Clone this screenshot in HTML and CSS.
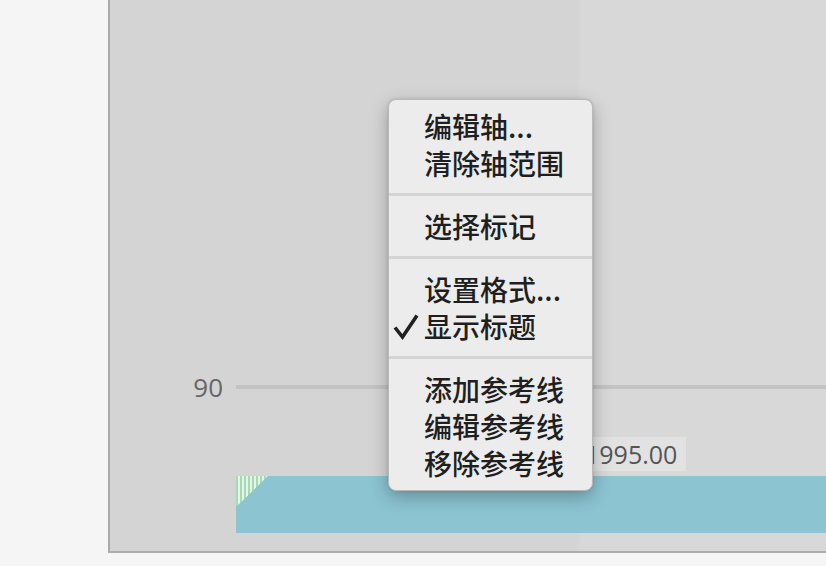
FILE: index.html
```html
<!DOCTYPE html>
<html lang="zh-CN">
<head>
<meta charset="utf-8">
<title>轴菜单</title>
<link rel="stylesheet" href="styles.css">
</head>
<body>
<div class="page">
  <div class="panel">
    <div class="plot-empty"></div>
    <div class="grid-row">
      <div class="axis-label">90</div>
      <div class="grid-line"></div>
    </div>
    <div class="label-row">
      <div class="data-label">1995.00</div>
    </div>
    <div class="bar">
      <div class="hatch"></div>
    </div>
  </div>

  <div class="menu">
    <div class="section">
      <div class="item"><span class="check"></span><span class="text">编辑轴...</span></div>
      <div class="item"><span class="check"></span><span class="text">清除轴范围</span></div>
    </div>
    <div class="sep"></div>
    <div class="section">
      <div class="item"><span class="check"></span><span class="text">选择标记</span></div>
    </div>
    <div class="sep"></div>
    <div class="section">
      <div class="item"><span class="check"></span><span class="text">设置格式...</span></div>
      <div class="item"><span class="check"><svg width="26" height="26" viewBox="0 0 26 26"><path d="M2 13.5 L9.5 23 L24 1.5" fill="none" stroke="#202020" stroke-width="3.6" stroke-linejoin="miter"/></svg></span><span class="text">显示标题</span></div>
    </div>
    <div class="sep"></div>
    <div class="section">
      <div class="item"><span class="check"></span><span class="text">添加参考线</span></div>
      <div class="item"><span class="check"></span><span class="text">编辑参考线</span></div>
      <div class="item"><span class="check"></span><span class="text">移除参考线</span></div>
    </div>
  </div>
</div>
</body>
</html>
```

FILE: styles.css
```css
html, body {
  margin: 0;
  padding: 0;
}
body {
  background: #f5f5f5;
  width: 826px;
  height: 566px;
  overflow: hidden;
}
.page {
  position: relative;
  width: 826px;
  height: 566px;
}
.panel {
  margin-left: 108px;
  width: 716px;
  height: 551px;
  border-left: 2px solid #a9a9a9;
  border-bottom: 2px solid #acacac;
  background: linear-gradient(to right, #d4d4d4 0, #d4d4d4 466px, #d8d8d8 472px, #d8d8d8 100%);
  display: flex;
  flex-direction: column;
}
.plot-empty {
  height: 375px;
  flex: none;
}
.grid-row {
  height: 24px;
  display: flex;
  align-items: center;
}
.axis-label {
  width: 113px;
  text-align: right;
  font-family: "Open Sans", "Liberation Sans", sans-serif;
  font-size: 26px;
  line-height: 24px;
  color: #676767;
}
.grid-line {
  margin-left: 13px;
  flex: 1;
  height: 4px;
  background: #c3c3c3;
}
.label-row {
  margin-top: 38px;
  height: 34px;
  padding-left: 466px;
  display: flex;
}
.data-label {
  background: #e2e2e2;
  padding: 0 9px 0 9px;
  font-family: "Open Sans", "Liberation Sans", sans-serif;
  font-size: 25px;
  line-height: 34px;
  color: #555555;
}
.bar {
  margin-top: 5px;
  margin-left: 126px;
  height: 57px;
  background: #8cc4d2;
  display: flex;
}
.hatch {
  width: 32px;
  height: 31px;
  background: repeating-linear-gradient(90deg, #a3dbb3 0, #a3dbb3 2px, #e4f5e8 2px, #e4f5e8 4px);
  clip-path: polygon(0 0, 100% 0, 0 100%);
}
.menu {
  position: absolute;
  left: 388px;
  top: 99px;
  width: 205px;
  box-sizing: border-box;
  background: #ececec;
  border: 1px solid #b9b9b9;
  border-radius: 8px;
  box-shadow: 0 6px 18px rgba(0, 0, 0, 0.28), 0 0 3px rgba(0, 0, 0, 0.12);
  padding: 8px 0 8px 0;
  font-family: "Noto Sans CJK SC", "Noto Sans", sans-serif;
  font-size: 28px;
  font-weight: 500;
  color: #1f1f1f;
}
.item {
  height: 37px;
  display: flex;
  align-items: center;
}
.check {
  width: 35px;
  flex: none;
  display: flex;
  align-items: center;
  padding-left: 4px;
  box-sizing: border-box;
}
.check svg {
  display: block;
}
.text {
  line-height: 37px;
  white-space: nowrap;
}
.sep {
  height: 3px;
  margin: 11px 0 12px 0;
  background: #d4d4d4;
}
```
